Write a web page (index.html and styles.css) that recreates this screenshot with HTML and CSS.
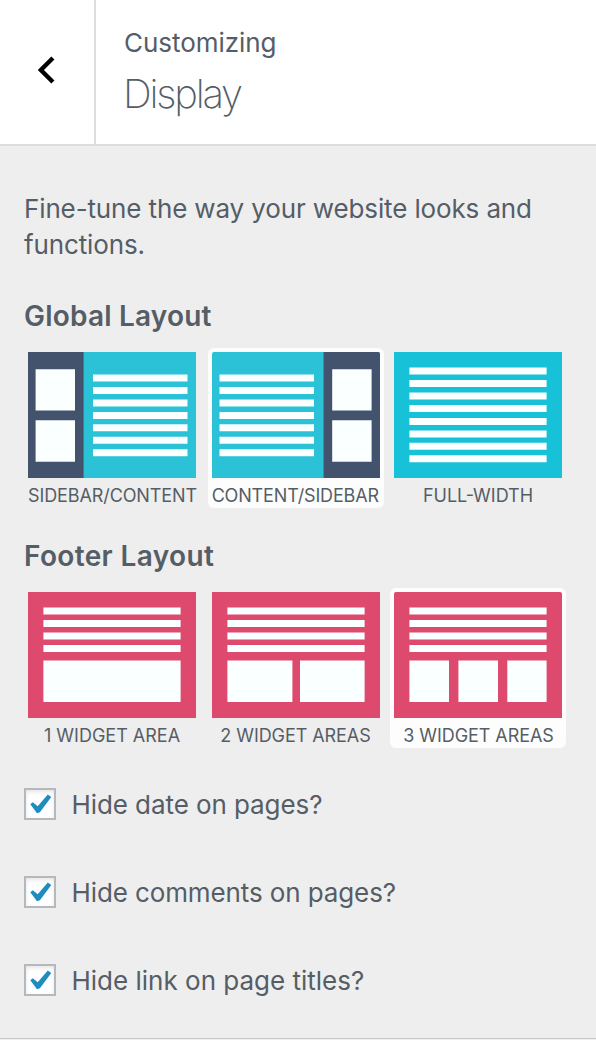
FILE: index.html
```
<!DOCTYPE html>
<html lang="en">
<head>
<meta charset="utf-8">
<title>Customizing Display</title>
<link rel="stylesheet" href="styles.css">
</head>
<body>
<svg class="defs" aria-hidden="true">
  <defs>
    <g id="content-lines">
      <path class="paper" d="M0 0h94.5v7H0zM0 12.4h94.5v7H0zM0 24.9h94.5v7H0zM0 37.3h94.5v7H0zM0 49.7h94.5v7H0zM0 62.1h94.5v7H0zM0 74.6h94.5v7H0z"/>
    </g>
    <g id="widgets">
      <path class="paper" d="M0 0h39.4v41.3H0zM0 51h39.4v41.5H0z"/>
    </g>
    <g id="page-lines">
      <path class="paper" d="M15.4 15.6h137.2v7H15.4zM15.4 28.1h137.2v7H15.4zM15.4 40.5h137.2v7H15.4zM15.4 52.9h137.2v7H15.4z"/>
    </g>
  </defs>
</svg>
<header class="header">
  <button class="back" aria-label="Back">
    <svg width="18" height="28" viewBox="0 0 18 28"><path d="M14.9 2L2.9 14l12 12" fill="none" stroke="#000" stroke-width="4.4"/></svg>
  </button>
  <div class="heading">
    <span class="eyebrow">Customizing</span>
    <h1 class="title">Display</h1>
  </div>
</header>
<main class="panel">
  <p class="intro">Fine-tune the way your website looks and functions.</p>

  <h2 class="section section-global">Global Layout</h2>
  <div class="options">
    <div class="option">
      <svg class="thumb" viewBox="0 0 168 126"><path class="cyan" d="M0 0h168v126H0z"/><path class="navy" d="M0 0h55.6v126H0z"/><use href="#widgets" x="7.6" y="17.2"/><use href="#content-lines" x="65" y="22.6"/></svg>
      <span class="label label-sc">SIDEBAR/CONTENT</span>
    </div>
    <div class="option selected">
      <svg class="thumb" viewBox="0 0 168 126"><path class="cyan" d="M0 0h168v126H0z"/><path class="navy" d="M111.6 0H168v126h-56.4z"/><use href="#widgets" x="120.2" y="17.2"/><use href="#content-lines" x="7.5" y="22.6"/></svg>
      <span class="label label-cs">CONTENT/SIDEBAR</span>
    </div>
    <div class="option last">
      <svg class="thumb" viewBox="0 0 168 126"><path class="aqua" d="M0 0h168v126H0z"/><use href="#page-lines"/><use href="#page-lines" y="50.3"/></svg>
      <span class="label">FULL-WIDTH</span>
    </div>
  </div>

  <h2 class="section section-footer">Footer Layout</h2>
  <div class="options">
    <div class="option">
      <svg class="thumb" viewBox="0 0 168 126"><path class="pink" d="M0 0h168v126H0z"/><use href="#page-lines"/><path class="paper" d="M15.4 68.5h137.2v41.6H15.4z"/></svg>
      <span class="label">1 WIDGET AREA</span>
    </div>
    <div class="option">
      <svg class="thumb" viewBox="0 0 168 126"><path class="pink" d="M0 0h168v126H0z"/><use href="#page-lines"/><path class="paper" d="M15.4 68.5h65v41.6h-65zM88 68.5h64.6v41.6H88z"/></svg>
      <span class="label label-w2">2 WIDGET AREAS</span>
    </div>
    <div class="option last selected">
      <svg class="thumb" viewBox="0 0 168 126"><path class="pink" d="M0 0h168v126H0z"/><use href="#page-lines"/><path class="paper" d="M15.4 68.5H55v41.6H15.4zM64.4 68.5H104v41.6H64.4zM113.3 68.5h39.3v41.6h-39.3z"/></svg>
      <span class="label label-w3">3 WIDGET AREAS</span>
    </div>
  </div>

  <div class="checks">
    <label class="check"><span class="box"><svg width="28" height="28" viewBox="0 0 28 28"><path class="tick" d="M4.3 14.3l2.6-2.1 4.8 4.1L21.8 4.4l3.5 2.7L13.9 22.3l-2.9.9z"/></svg></span><span class="check-text">Hide date on pages?</span></label>
    <label class="check"><span class="box"><svg width="28" height="28" viewBox="0 0 28 28"><path class="tick" d="M4.3 14.3l2.6-2.1 4.8 4.1L21.8 4.4l3.5 2.7L13.9 22.3l-2.9.9z"/></svg></span><span class="check-text check-comments">Hide comments on pages?</span></label>
    <label class="check"><span class="box"><svg width="28" height="28" viewBox="0 0 28 28"><path class="tick" d="M4.3 14.3l2.6-2.1 4.8 4.1L21.8 4.4l3.5 2.7L13.9 22.3l-2.9.9z"/></svg></span><span class="check-text check-link">Hide link on page titles?</span></label>
  </div>
</main>
</body>
</html>
```
FILE: styles.css
```
* { box-sizing: border-box; }
body {
  margin: 0;
  height: 1040px;
  overflow: hidden;
  display: flex;
  flex-direction: column;
  background: #eee;
  color: #555d66;
  font-family: Inter, "Liberation Sans", sans-serif;
  font-size: 26px;
  line-height: 36px;
}
.defs { display: block; width: 0; height: 0; flex: none; }
h1, h2, p { margin: 0; }
.header {
  display: flex;
  flex: none;
  height: 146px;
  background: #fff;
  border-bottom: 2px solid #ddd;
}
.back {
  width: 96px;
  padding: 0 0 4px;
  border: 0;
  border-right: 2px solid #ddd;
  background: #fff;
  display: flex;
  align-items: center;
  justify-content: center;
}
.heading { padding: 25px 0 0 28px; }
.eyebrow { display: block; letter-spacing: -0.05px; }
.title {
  font-size: 40px;
  font-weight: 200;
  line-height: 48px;
  margin: 9px 0 0 -1px;
  letter-spacing: -2.2px;
}
.panel {
  flex: none;
  height: 893px;
  padding: 45px 24px 0;
  border-bottom: 1px solid #c8c8c8;
}
.intro { width: 540px; letter-spacing: -0.13px; }
.section {
  font-size: 28px;
  font-weight: 600;
  line-height: 36px;
}
.section-global { margin-top: 35px; letter-spacing: 0.2px; }
.section-footer { margin-top: 30px; letter-spacing: 0.36px; }
.options {
  display: flex;
  gap: 8px;
  margin-top: 14px;
}
.option {
  width: 176px;
  height: 160px;
  padding: 4px;
  border-radius: 6px;
  display: flex;
  flex-direction: column;
  align-items: center;
}
.last { margin-left: -2px; }
.selected { background: #fdfdfd; }
.selected .thumb { border-radius: 2px 2px 0 0; }
.thumb { display: block; width: 168px; height: 126px; flex: none; }
.label {
  font-size: 18px;
  line-height: 24px;
  margin-top: 6px;
  white-space: nowrap;
}
.label-sc { letter-spacing: -0.1px; padding-left: 1px; }
.label-cs { letter-spacing: -0.16px; padding-right: 1.5px; }
.label-w2 { letter-spacing: -0.07px; padding-right: 1px; }
.label-w3 { letter-spacing: -0.07px; padding-left: 1px; }
.checks {
  display: flex;
  flex-direction: column;
  gap: 52px;
  margin-top: 38px;
}
.check { display: flex; align-items: center; gap: 15.5px; height: 36px; }
.box {
  width: 32px;
  height: 32px;
  border: 2px solid #b4b9be;
  background: #fff;
  box-shadow: inset 0 2px 4px rgba(0, 0, 0, 0.1);
  flex: none;
}
.box svg { display: block; }
.check-text { height: 36px; padding-top: 1px; letter-spacing: -0.08px; }
.check-comments { letter-spacing: -0.11px; }
.check-link { letter-spacing: 0; }
.tick { fill: #1e8cbe; }
.paper { fill: #faffff; }
.cyan { fill: #2bc1d6; }
.aqua { fill: #17c1d8; }
.navy { fill: #43536d; }
.pink { fill: #de4a6e; }
```
